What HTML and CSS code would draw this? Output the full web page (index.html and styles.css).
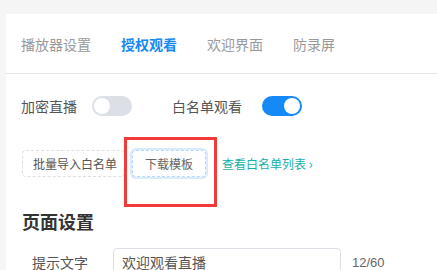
FILE: index.html
```html
<!DOCTYPE html>
<html lang="zh-CN">
<head>
  <meta charset="UTF-8">
  <title>授权观看</title>
  <link rel="stylesheet" href="styles.css">
</head>
<body>
<div class="card">
  <div class="tabs">
    <span class="tab">播放器设置</span>
    <span class="tab active">授权观看</span>
    <span class="tab">欢迎界面</span>
    <span class="tab">防录屏</span>
  </div>
  <div class="content">
    <div class="switch-row">
      <span class="label">加密直播</span>
      <span class="switch"><i class="knob"></i></span>
      <span class="label second">白名单观看</span>
      <span class="switch on"><i class="knob"></i></span>
    </div>
    <div class="btn-row">
      <button class="dash-btn">批量导入白名单</button>
      <button class="dash-btn focus">下载模板</button>
      <a class="link">查看白名单列表 <span class="arrow">›</span></a>
      <div class="mark"></div>
    </div>
    <h2 class="section-title">页面设置</h2>
    <div class="form-row">
      <span class="form-label">提示文字</span>
      <div class="input">欢迎观看直播</div>
      <span class="count">12/60</span>
    </div>
  </div>
</div>
</body>
</html>
```
FILE: styles.css
```css
body {
  margin: 0;
  background-color: #f5f5f5;
  font-family: "Noto Sans CJK SC", "Liberation Sans", sans-serif;
  overflow: hidden;
}
.card {
  margin: 14px 0 0 6px;
  height: 300px;
  background-color: #fff;
}
.tabs {
  display: flex;
  align-items: center;
  gap: 30px;
  height: 59px;
  padding-left: 15px;
  border-bottom: 1px solid #e4e4e4;
}
.tab {
  font-size: 14px;
  color: #999;
}
.tab.active {
  color: #1589f5;
  font-weight: bold;
}
.content {
  padding: 0 15px;
}
.switch-row {
  display: flex;
  align-items: center;
  height: 20px;
  margin-top: 22px;
}
.label {
  font-size: 14px;
  color: #555;
  margin-right: 15px;
}
.label.second {
  margin-left: 40px;
  margin-right: 20px;
}
.switch {
  position: relative;
  width: 40px;
  height: 20px;
  border-radius: 10px;
  background-color: #dcdfe6;
}
.switch.on {
  background-color: #1589f5;
}
.knob {
  position: absolute;
  top: 2px;
  left: 2px;
  width: 16px;
  height: 16px;
  border-radius: 50%;
  background-color: #fff;
}
.switch.on .knob {
  left: 22px;
}
.btn-row {
  position: relative;
  display: flex;
  align-items: center;
  height: 27px;
  margin-top: 34px;
  padding-left: 1px;
}
.dash-btn {
  height: 27px;
  padding: 0 7px 0 10px;
  border: 1px dashed #dcdfe6;
  border-radius: 4px;
  background-color: #fff;
  font-family: inherit;
  font-size: 12px;
  color: #555;
  margin-right: 7px;
}
.dash-btn.focus {
  padding: 0 12px;
  border-color: #b7d9fb;
  box-shadow: 0 0 0 2px #d8eafc;
  color: #666;
  margin-right: 16px;
}
.link {
  font-size: 12px;
  color: #17b0a9;
}
.arrow {
  font-size: 13px;
}
.mark {
  position: absolute;
  left: 103px;
  top: -13px;
  width: 87px;
  height: 64px;
  border: 3px solid #f23a3a;
}
.section-title {
  margin: 32px 0 0 1px;
  font-size: 18px;
  line-height: 24px;
  color: #333;
}
.form-row {
  display: flex;
  align-items: center;
  margin-top: 15px;
}
.form-label {
  width: 81px;
  padding-left: 11px;
  font-size: 14px;
  line-height: 18px;
  color: #555;
}
.input {
  width: 218px;
  height: 26px;
  line-height: 26px;
  padding-left: 8px;
  border: 1px solid #dcdfe6;
  border-radius: 4px;
  font-size: 14px;
  color: #555;
}
.count {
  margin-left: 11px;
  font-size: 13px;
  color: #666;
  font-family: "Liberation Sans", sans-serif;
}
```
